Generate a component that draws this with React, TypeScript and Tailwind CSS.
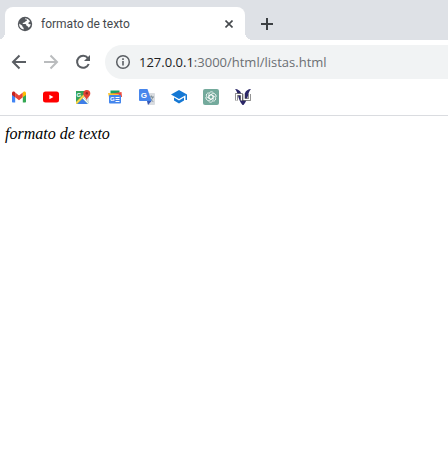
import React from "react";

function GlobeIcon() {
  return (
    <svg viewBox="0 0 16 16" className="h-4 w-4 shrink-0" aria-hidden="true">
      <circle cx="8" cy="8" r="7.2" fill="#54585d" />
      <path d="M8.2 2.2c-.4 1 .6 1.4 1.5 1.3.6.3.3 1.300-.5 1.500-.9.2-.9.9-1.500 1.300-.8.4-1.900.3-2.100 1.100 0 .7 1 .6 2.100.6 1.300 0 1.700.7 1.700 1.600 0 .8 1 .5 1.500 1 .3.4.5.9.9 1.200A5.800 5.800 0 0 0 13.800 8c-.9.5-2 .4-2.400-.4-.3-.8.3-1.400 1.100-1.700.3-.2.500-.5.4-.9A5.900 5.900 0 0 0 8.200 2.200Z" fill="#fff" />
      <path d="M2.200 7.500C3 8.400 4 8.700 5 9.600c.7.5.2 1.300.8 1.700.9.3 1 .9.8 2.300A5.900 5.900 0 0 1 2.200 7.500Z" fill="#fff" />
    </svg>
  );
}

function BackIcon() {
  return (
    <svg viewBox="0 0 16 16" className="h-4 w-4" fill="none" stroke="currentColor" strokeWidth="2" aria-hidden="true">
      <path d="M15 8H2.500M8.500 1.500 2 8l6.500 6.500" />
    </svg>
  );
}

function ForwardIcon() {
  return (
    <svg viewBox="0 0 16 16" className="h-4 w-4" fill="none" stroke="currentColor" strokeWidth="2" aria-hidden="true">
      <path d="M1 8h12.500M7.500 1.500 14 8l-6.500 6.500" />
    </svg>
  );
}

function ReloadIcon() {
  return (
    <svg viewBox="0 0 16 16" className="h-4 w-4" aria-hidden="true">
      <path d="M12.900 4.200A6 6 0 1 0 13.700 10" fill="none" stroke="currentColor" strokeWidth="2" />
      <path d="M15 1v6H9z" fill="currentColor" />
    </svg>
  );
}

function InfoIcon() {
  return (
    <svg viewBox="0 0 16 16" className="h-4 w-4" aria-hidden="true">
      <circle cx="8" cy="8" r="6.300" fill="none" stroke="currentColor" strokeWidth="1.500" />
      <path d="M7.200 7h1.600v4.500H7.200zM7.200 4.300h1.600v1.600H7.200z" fill="currentColor" />
    </svg>
  );
}

const iconText = { fontFamily: '"Liberation Sans", Arial, sans-serif', fontWeight: 700 };

function GmailIcon() {
  return (
    <svg viewBox="0 0 16 16" className="h-4 w-4" aria-hidden="true">
      <path d="M1 4.500v8c0 .6.4 1 1 1h2.200V6.800z" fill="#4285f4" />
      <path d="M11.800 13.500H14c.6 0 1-.4 1-1v-8l-3.200 2.300z" fill="#34a853" />
      <path d="M4.200 3.600v4.700L8 11.200l3.800-2.900V3.600L8 6.500z" fill="#ea4335" />
      <path d="M11.800 3.600v4.700L15 5.900V4.300c0-1.600-1.700-2.200-2.700-1.200z" fill="#fbbc04" />
      <path d="M1 4.300v1.600l3.200 2.400V3.600l-.5-.5C2.700 2.100 1 2.700 1 4.300z" fill="#c5221f" />
    </svg>
  );
}

function YouTubeIcon() {
  return (
    <svg viewBox="0 0 16 16" className="h-4 w-4" aria-hidden="true">
      <rect x="0" y="2.500" width="16" height="11" rx="2.500" fill="#f00" />
      <path d="M6.400 5.700v4.600l4-2.300z" fill="#fff" />
    </svg>
  );
}

function MapsIcon() {
  return (
    <svg viewBox="0 0 16 16" className="h-4 w-4" aria-hidden="true">
      <path d="M1 2h13v13H1z" fill="#34a35a" />
      <path d="M7.500 7.500 14 14.500V7z" fill="#dfe1e3" />
      <path d="m2 15 5.500-5.500L13 15z" fill="#3f7ee8" />
      <path d="M1 13 8.500 5.500 10 7 2 15H1z" fill="#fbd34b" />
      <path d="m7.500 9.500 1-1 5.500 6V15h-1z" fill="#fff" />
      <text x="1.500" y="7.500" fontSize="6" fill="#fff" style={iconText}>G</text>
      <path d="M11.700 11.500c-.3-3.200-3.400-4-3.400-7a3.500 3.500 0 0 1 7 0c0 3-3.300 3.800-3.600 7z" fill="#e44435" />
      <circle cx="11.800" cy="4.300" r="1.200" fill="#8f2723" />
    </svg>
  );
}

function NewsIcon() {
  return (
    <svg viewBox="0 0 16 16" className="h-4 w-4" aria-hidden="true">
      <path d="M3.500 1.500h9v6h-9z" fill="#18a05e" />
      <path d="m5 4.500 9.500-1.500.5 5H5z" fill="#ed4c3d" />
      <path d="m1 4 10.500 1 2 3.500H2z" fill="#fbc52d" />
      <rect x="2" y="6" width="12" height="8.500" rx="1" fill="#4385ed" />
      <text x="3" y="12.300" fontSize="6" fill="#fff" style={iconText}>G</text>
      <path d="M8.500 8.500h4M8.500 10.500h4M8.500 12.500h4" stroke="#fff" strokeWidth="1" />
    </svg>
  );
}

function TranslateIcon() {
  return (
    <svg viewBox="0 0 16 16" className="h-4 w-4" aria-hidden="true">
      <path d="M6 4h9a1 1 0 0 1 1 1v10a1 1 0 0 1-1 1H9z" fill="#dadde1" />
      <path d="M10 8h5M12.300 6.500V8m1.500 0c-.6 2.200-1.600 3.500-3 4.300m.5-2.800c.6 1.500 1.500 2.300 3 3" fill="none" stroke="#7b8b95" strokeWidth="1" />
      <path d="M1 0h7.500l4 12H1a1 1 0 0 1-1-1V1a1 1 0 0 1 1-1z" fill="#4786ec" />
      <path d="M8 12h4.500L9 16z" fill="#3557b7" />
      <text x="1.700" y="8.700" fontSize="8" fill="#fff" style={iconText}>G</text>
    </svg>
  );
}

function SchoolIcon() {
  return (
    <svg viewBox="0 0 16 16" className="h-4 w-4" fill="#1578d4" aria-hidden="true">
      <path d="M8 1 0 5.500 8 10l6.500-3.700V11H16V5.500z" />
      <path d="M3 8.600v3L8 14.500l5-2.900v-3l-5 2.800z" />
    </svg>
  );
}

function ChatIcon() {
  return (
    <svg viewBox="0 0 24 24" className="h-4 w-4" aria-hidden="true">
      <rect width="24" height="24" rx="3" fill="#74aa9c" />
      <g fill="none" stroke="#fff" strokeWidth="1.200">
        {[0, 60, 120, 180, 240, 300].map((angle) => (
          <path key={angle} d="M12 8.500 15.200 10.300V16a3.800 3.800 0 0 1-5.700 3.300L8.300 18.500" transform={`rotate(${angle} 12 12)`} />
        ))}
      </g>
    </svg>
  );
}

function NuIcon() {
  return (
    <svg viewBox="0 0 16 16" className="h-4 w-4" aria-hidden="true">
      <path d="M0 0c3 .2 5 1.500 6 4l2 5 2-5c1-2.500 3-3.800 6-4-1.500 1.500-2 3-2.700 5.500C12.300 10 11 13 8.500 16h-1C5 13 3.700 10 2.700 5.500 2 3 1.500 1.500 0 0z" fill="#2b2768" />
      <path d="M1.500 11.500v-6H6.500v6M9 5v5.500h5.500V5" fill="none" stroke="#333" strokeWidth="2.400" />
      <path d="M1.500 11.500v-6H6.500v6M9 5v5.500h5.500V5" fill="none" stroke="#fff" strokeWidth="1.500" />
    </svg>
  );
}

const bookmarks = [
  { label: "Gmail", Icon: GmailIcon },
  { label: "YouTube", Icon: YouTubeIcon },
  { label: "Maps", Icon: MapsIcon },
  { label: "Noticias", Icon: NewsIcon },
  { label: "Traducir", Icon: TranslateIcon },
  { label: "Escuela", Icon: SchoolIcon },
  { label: "ChatGPT", Icon: ChatIcon },
  { label: "Nu", Icon: NuIcon },
];

export default function App() {
  return (
    <div className="min-h-screen bg-white font-['Open_Sans','Noto_Sans',sans-serif]">
      <header>
        <div className="flex h-10 items-end overflow-hidden bg-[#dee1e6] pl-[5px]">
          <div className="relative flex h-[33px] w-60 items-center rounded-t-lg bg-white pr-2 pl-3" role="tab" aria-selected="true">
            <span className="absolute bottom-0 -left-2 h-2 w-2 bg-[radial-gradient(circle_at_0_0,transparent_8px,white_8px)]" />
            <span className="absolute -right-2 bottom-0 h-2 w-2 bg-[radial-gradient(circle_at_100%_0,transparent_8px,white_8px)]" />
            <GlobeIcon />
            <span className="ml-2 flex-1 truncate font-['Roboto',sans-serif] text-xs text-[#45494d]">formato de texto</span>
            <button type="button" aria-label="Cerrar" className="flex h-4 w-4 items-center justify-center text-[#45494d]">
              <svg viewBox="0 0 8 8" className="h-2 w-2" stroke="currentColor" strokeWidth="1.600" aria-hidden="true">
                <path d="m.5.5 7 7m0-7-7 7" />
              </svg>
            </button>
          </div>
          <button type="button" aria-label="Nueva pestaña" className="ml-2 flex h-[33px] w-7 items-center justify-center text-[#3c4043]">
            <svg viewBox="0 0 12 12" className="h-3 w-3" stroke="currentColor" strokeWidth="2" aria-hidden="true">
              <path d="M6 0v12M0 6h12" />
            </svg>
          </button>
        </div>

        <div className="flex h-11 items-center pl-[11px] text-[#5a5e63]">
          <div className="flex gap-4">
            <button type="button" aria-label="Atrás"><BackIcon /></button>
            <button type="button" aria-label="Adelante" disabled className="text-[#babcbe]"><ForwardIcon /></button>
            <button type="button" aria-label="Volver a cargar"><ReloadIcon /></button>
          </div>
          <div className="ml-[14px] flex h-[34px] flex-1 items-center gap-2 rounded-l-full bg-[#f1f3f4] pl-[10px]">
            <button type="button" aria-label="Información del sitio"><InfoIcon /></button>
            <span className="text-[13px] leading-5 text-[#6b6f73]">
              <span className="text-[#202124]">127.0.0.1</span>:3000/html/listas.html
            </span>
          </div>
        </div>

        <nav aria-label="Marcadores" className="flex h-8 items-start gap-4 border-b border-[#dadce0] pt-[5px] pl-[11px]">
          {bookmarks.map(({ label, Icon }) => (
            <a key={label} href="#" aria-label={label}><Icon /></a>
          ))}
        </nav>
      </header>

      <main className="px-[5px] pt-2 font-['Liberation_Serif',serif] text-base leading-5 text-black">
        <em>formato de texto</em>
      </main>
    </div>
  );
}
